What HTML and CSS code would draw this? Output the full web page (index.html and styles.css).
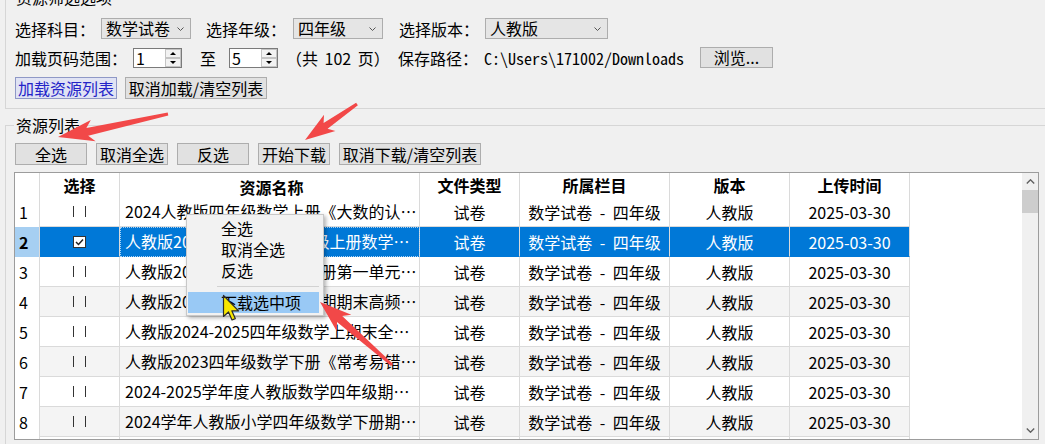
FILE: index.html
```html
<!DOCTYPE html>
<html lang="zh-CN">
<head>
    <meta charset="UTF-8">
    <title>资源下载</title>
    <link rel="stylesheet" href="styles.css">
</head>
<body>

<div class="window">
    <section class="group filter">
        <h2 class="group-title">资源筛选选项</h2>
        <div class="row r1">
            <label class="lbl w86">选择科目：</label>
            <div class="combo w90"><span>数学试卷</span><svg class="caret" width="7" height="4" viewBox="0 0 7 4"><path d="M0.5 0.5l3 3 3-3"/></svg></div>
            <label class="lbl w87 ml15">选择年级：</label>
            <div class="combo w90"><span>四年级</span><svg class="caret" width="7" height="4" viewBox="0 0 7 4"><path d="M0.5 0.5l3 3 3-3"/></svg></div>
            <label class="lbl w86 ml16">选择版本：</label>
            <div class="combo w123"><span>人教版</span><svg class="caret" width="7" height="4" viewBox="0 0 7 4"><path d="M0.5 0.5l3 3 3-3"/></svg></div>
        </div>
        <div class="row r2">
            <label class="lbl w118">加载页码范围：</label>
            <div class="spin"><span>1</span><div class="spin-btns"><i class="up"></i><i class="down"></i></div></div>
            <span class="to">至</span>
            <div class="spin"><span>5</span><div class="spin-btns"><i class="up"></i><i class="down"></i></div></div>
            <span class="pages">（共 102 页）</span>
            <label class="lbl w86">保存路径：</label>
            <span class="path">C:\Users\171002/Downloads</span>
            <button class="btn btn-browse">浏览...</button>
        </div>
        <div class="row r3">
            <button class="btn btn-load">加载资源列表</button>
            <button class="btn btn-clear">取消加载/清空列表</button>
        </div>
    </section>

    <section class="group list">
        <h2 class="group-title">资源列表</h2>
        <div class="toolbar">
            <button class="btn tb">全选</button>
            <button class="btn tb">取消全选</button>
            <button class="btn tb">反选</button>
            <button class="btn tb">开始下载</button>
            <button class="btn tb wide">取消下载/清空列表</button>
        </div>

        <div class="grid-box">
            <div class="grid">
                <div class="tr head">
                    <div class="td c-no"></div>
                    <div class="td c-sel">选择</div>
                    <div class="td c-name">资源名称</div>
                    <div class="td c-type">文件类型</div>
                    <div class="td c-cat">所属栏目</div>
                    <div class="td c-ver">版本</div>
                    <div class="td c-time">上传时间</div>
                </div>
                <div class="tr">
                    <div class="td c-no">1</div>
                    <div class="td c-sel"><span class="cb"></span></div>
                    <div class="td c-name">2024人教版四年级数学上册《大数的认识》单元测试卷</div>
                    <div class="td c-type">试卷</div>
                    <div class="td c-cat">数学试卷 - 四年级</div>
                    <div class="td c-ver">人教版</div>
                    <div class="td c-time">2025-03-30</div>
                </div>
                <div class="tr alt sel">
                    <div class="td c-no">2</div>
                    <div class="td c-sel"><svg width="13" height="12" viewBox="0 0 13 12"><rect x="0.5" y="0.5" width="12" height="11" fill="#fff" stroke="#333"/><path d="M3 6l2.5 2.5 4.5-5" fill="none" stroke="#222" stroke-width="1.5"/></svg></div>
                    <div class="td c-name focus">人教版2024-2025学年四年级上册数学期中测试卷</div>
                    <div class="td c-type">试卷</div>
                    <div class="td c-cat">数学试卷 - 四年级</div>
                    <div class="td c-ver">人教版</div>
                    <div class="td c-time">2025-03-30</div>
                </div>
                <div class="tr">
                    <div class="td c-no">3</div>
                    <div class="td c-sel"><span class="cb"></span></div>
                    <div class="td c-name">人教版2024年四年级数学下册第一单元测试卷</div>
                    <div class="td c-type">试卷</div>
                    <div class="td c-cat">数学试卷 - 四年级</div>
                    <div class="td c-ver">人教版</div>
                    <div class="td c-time">2025-03-30</div>
                </div>
                <div class="tr alt">
                    <div class="td c-no">4</div>
                    <div class="td c-sel"><span class="cb"></span></div>
                    <div class="td c-name">人教版2024四年级数学上学期期末高频考点卷</div>
                    <div class="td c-type">试卷</div>
                    <div class="td c-cat">数学试卷 - 四年级</div>
                    <div class="td c-ver">人教版</div>
                    <div class="td c-time">2025-03-30</div>
                </div>
                <div class="tr">
                    <div class="td c-no">5</div>
                    <div class="td c-sel"><span class="cb"></span></div>
                    <div class="td c-name">人教版2024-2025四年级数学上期末全真卷</div>
                    <div class="td c-type">试卷</div>
                    <div class="td c-cat">数学试卷 - 四年级</div>
                    <div class="td c-ver">人教版</div>
                    <div class="td c-time">2025-03-30</div>
                </div>
                <div class="tr alt">
                    <div class="td c-no">6</div>
                    <div class="td c-sel"><span class="cb"></span></div>
                    <div class="td c-name">人教版2023四年级数学下册《常考易错题》专项卷</div>
                    <div class="td c-type">试卷</div>
                    <div class="td c-cat">数学试卷 - 四年级</div>
                    <div class="td c-ver">人教版</div>
                    <div class="td c-time">2025-03-30</div>
                </div>
                <div class="tr">
                    <div class="td c-no">7</div>
                    <div class="td c-sel"><span class="cb"></span></div>
                    <div class="td c-name">2024-2025学年度人教版数学四年级期中卷</div>
                    <div class="td c-type">试卷</div>
                    <div class="td c-cat">数学试卷 - 四年级</div>
                    <div class="td c-ver">人教版</div>
                    <div class="td c-time">2025-03-30</div>
                </div>
                <div class="tr alt">
                    <div class="td c-no">8</div>
                    <div class="td c-sel"><span class="cb"></span></div>
                    <div class="td c-name">2024学年人教版小学四年级数学下册期中测试</div>
                    <div class="td c-type">试卷</div>
                    <div class="td c-cat">数学试卷 - 四年级</div>
                    <div class="td c-ver">人教版</div>
                    <div class="td c-time">2025-03-30</div>
                </div>
                <div class="tr">
                    <div class="td c-no">9</div>
                    <div class="td c-sel"><span class="cb"></span></div>
                    <div class="td c-name">人教版四年级数学下册期末测试卷</div>
                    <div class="td c-type">试卷</div>
                    <div class="td c-cat">数学试卷 - 四年级</div>
                    <div class="td c-ver">人教版</div>
                    <div class="td c-time">2025-03-30</div>
                </div>
            </div>
            <div class="vscroll">
                <div class="sb-btn"><svg width="9" height="5" viewBox="0 0 9 5"><path d="M0.8 4.4l3.7-3.6 3.7 3.6"/></svg></div>
                <div class="sb-thumb"></div>
                <div class="sb-btn bottom"><svg width="9" height="5" viewBox="0 0 9 5"><path d="M0.8 0.6l3.7 3.6 3.7-3.6"/></svg></div>
            </div>
        </div>
    </section>

    <!-- right-click menu on the list -->
    <div class="ctx-menu">
        <div class="mi">全选</div>
        <div class="mi">取消全选</div>
        <div class="mi">反选</div>
        <div class="sep"></div>
        <div class="mi hot">下载选中项</div>
    </div>

    <!-- red pointer arrows and mouse cursor drawn on top -->
    <svg class="marks" width="1045" height="444" viewBox="0 0 1045 444">
        <g fill="#f24848">
            <polygon points="58,140 90.8,122.9 86.4,131 167.7,115.5 168.3,118.5 88.2,138.8 95.6,144.3"/>
            <polygon points="305,143 324,117.7 323.6,125.9 356.1,105.8 357.9,108.2 327.6,131.7 335.4,134.1"/>
            <polygon points="320,305 351.3,317.8 342.2,319.1 393,366.9 391,369.1 337,325.1 336.9,334.4"/>
        </g>
        <path class="cursor" d="M223.5 298.5v21l5-4.5 3.5 8 3.3-1.4-3.4-7.7h6.6z"/>
    </svg>
</div>

</body>
</html>
```

FILE: styles.css
```css
* {
    box-sizing: border-box;
}
body {
    margin: 0;
    width: 1045px;
    height: 444px;
    overflow: hidden;
    background-color: #f0f0f0;
    font-family: "Noto Sans CJK SC", "Noto Sans", sans-serif;
    font-size: 16px;
    color: #000;
}
.window {
    position: relative;
    height: 444px;
    padding-left: 5px;
}

/* group boxes */
.group {
    position: relative;
    width: 1100px;
    border: 1px solid #d6d6d6;
}
.group-title {
    position: absolute;
    top: -11px;
    left: 8px;
    margin: 0;
    padding: 0 2px;
    font-size: 16px;
    font-weight: normal;
    line-height: 20px;
    background-color: #f0f0f0;
}
.filter {
    margin-top: -3px;
    height: 112px;
    padding: 20px 0 8px 9px;
}
.list {
    margin-top: 16px;
    height: 340px;
    padding: 17px 0 0 8px;
}

.row {
    display: flex;
    align-items: center;
}
.r1 { height: 21px; }
.r2 { height: 21px; margin-top: 8px; }
.r3 { height: 22px; margin-top: 9px; }

.lbl { white-space: nowrap; line-height: 20px; }
.w86 { width: 86px; }
.w87 { width: 87px; }
.w90 { width: 90px; }
.w118 { width: 118px; }
.w123 { width: 123px; }
.ml15 { margin-left: 15px; }
.ml16 { margin-left: 16px; }

.combo {
    height: 21px;
    display: flex;
    align-items: center;
    justify-content: space-between;
    padding: 0 6px 0 4px;
    border: 1px solid #adadad;
    background-color: #e5e5e5;
    line-height: 19px;
}
.caret path {
    fill: none;
    stroke: #555;
    stroke-width: 1;
}

.spin {
    width: 49px;
    height: 20px;
    display: flex;
    border: 1px solid #7a7a7a;
    background-color: #fff;
    line-height: 18px;
}
.spin span {
    flex: 1;
    padding-left: 2px;
}
.spin-btns {
    width: 16px;
    display: flex;
    flex-direction: column;
}
.spin-btns i {
    flex: 1;
    display: flex;
    align-items: center;
    justify-content: center;
    border: 1px solid #c4c4c4;
    background-color: #f2f2f2;
}
.spin-btns i::after {
    content: "";
    border-left: 3px solid transparent;
    border-right: 3px solid transparent;
}
.spin-btns .up::after { border-bottom: 3px solid #000; }
.spin-btns .down::after { border-top: 3px solid #000; }

.to {
    margin-left: 18px;
    width: 29px;
}
.pages {
    margin-left: 8px;
    width: 112px;
    white-space: pre;
    word-spacing: 3px;
}
.path {
    width: 216px;
    font-family: "Noto Sans Mono CJK SC", "Liberation Mono", monospace;
    font-size: 16px;
    white-space: nowrap;
}

.btn {
    height: 22px;
    padding: 0;
    font-family: inherit;
    font-size: 16px;
    line-height: 20px;
    color: #000;
    border: 1px solid #adadad;
    background-color: #e1e1e1;
    white-space: nowrap;
}
.btn-browse {
    width: 73px;
    height: 21px;
    line-height: 19px;
}
.btn-load {
    width: 102px;
    color: #2424c8;
    border-color: #8f98c6;
    background-color: #e0e3f4;
}
.btn-clear {
    width: 142px;
    margin-left: 8px;
}

.toolbar {
    display: flex;
    gap: 9px;
    margin-left: 1px;
}
.tb { width: 72px; }
.tb.wide { width: 142px; }

/* data grid */
.grid-box {
    display: flex;
    width: 1025px;
    height: 268px;
    margin-top: 7px;
    border: 1px solid #9c9c9c;
    background-color: #fff;
}
.grid {
    flex: 1;
    overflow: hidden;
}
.tr {
    display: flex;
    height: 30px;
}
.tr.head {
    height: 24px;
    font-weight: bold;
}
.td {
    flex: none;
    display: flex;
    align-items: center;
    justify-content: center;
    padding: 0 3px;
    border-right: 1px solid #dadada;
    border-bottom: 1px solid #dadada;
    white-space: nowrap;
    overflow: hidden;
}
.head .td {
    border-bottom: none;
}
.c-no {
    width: 25px;
    justify-content: flex-start;
    padding-left: 4px;
    border-bottom: none;
}
.c-sel { width: 80px; }
.c-name {
    width: 300px;
    display: block;
    line-height: 29px;
    text-align: center;
    text-overflow: ellipsis;
    padding: 0 1px 0 5px;
}
.c-type { width: 100px; }
.c-cat { width: 150px; word-spacing: 4px; }
.c-ver { width: 120px; }
.c-time { width: 120px; }

.tr.alt .td:not(.c-no) {
    background-color: #f4f4f4;
}
.tr.sel .td:not(.c-no) {
    background-color: #0078d7;
    color: #fff;
    border-bottom-color: #0078d7;
}
.tr.sel .c-no {
    background-color: #a6cff2;
    color: #000;
    font-weight: bold;
}
.focus {
    outline: 1px dotted #a9d2f5;
    outline-offset: -1px;
}
.cb {
    width: 13px;
    height: 11px;
    border-left: 1px solid #333;
    border-right: 1px solid #333;
}

.vscroll {
    width: 16px;
    display: flex;
    flex-direction: column;
    background-color: #f0f0f0;
}
.sb-btn {
    height: 17px;
    display: flex;
    align-items: center;
    justify-content: center;
}
.sb-btn.bottom {
    margin-top: auto;
}
.sb-btn path {
    fill: none;
    stroke: #606060;
    stroke-width: 1.4;
}
.sb-thumb {
    height: 23px;
    background-color: #cdcdcd;
}

/* context menu */
.ctx-menu {
    position: absolute;
    left: 186px;
    top: 217px;
    width: 138px;
    padding: 3px 4px 2px 1px;
    border: 1px solid #c8c8c8;
    background-color: #f2f2f2;
    box-shadow: 2px 2px 4px rgba(0, 0, 0, 0.3);
}
.mi {
    height: 21px;
    line-height: 21px;
    padding-left: 33px;
}
.mi.hot {
    background-color: #99c9f5;
}
.sep {
    height: 1px;
    margin: 5px 0 5px 29px;
    background-color: #d2d2d2;
}

.marks {
    position: absolute;
    left: 0;
    top: 0;
    pointer-events: none;
}
.cursor {
    fill: #f7e600;
    stroke: #2a2a2a;
    stroke-width: 1.2;
    stroke-linejoin: round;
}
```
